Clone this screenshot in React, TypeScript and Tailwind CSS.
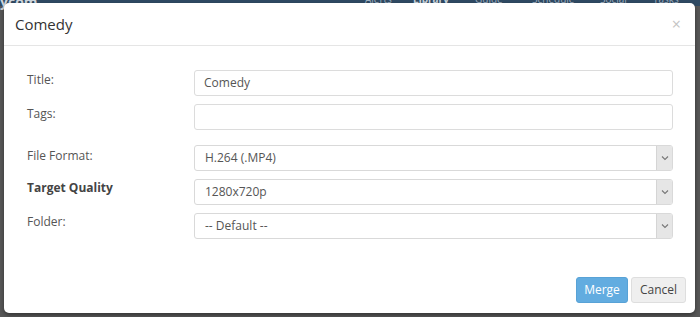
import React from "react";

function Chevron() {
  return (
    <svg width="8" height="6" viewBox="0 0 8 6" fill="none">
      <path d="M1 1.5 L4 4.5 L7 1.5" stroke="#777" strokeWidth="1.1" />
    </svg>
  );
}

function Select({ value }: { value: string }) {
  return (
    <div className="flex h-[26px] w-[479px] rounded-[3px] border border-[#d9d9d9] bg-white overflow-hidden">
      <div className="flex-1 flex items-center pl-[10px] text-[12px] text-[#555]">{value}</div>
      <div className="w-[16px] flex items-center justify-center bg-[#e6e6e6] border-l border-[#d5d5d5]">
        <Chevron />
      </div>
    </div>
  );
}

function Input({ value }: { value?: string }) {
  return (
    <div className="flex items-center h-[26px] w-[479px] rounded-[3px] border border-[#dcdcdc] bg-white pl-[9px] text-[12px] text-[#555]">
      {value}
    </div>
  );
}

export default function App() {
  return (
    <div
      className="relative w-[700px] h-[317px] overflow-hidden bg-[#575757]"
      style={{ fontFamily: '"Open Sans", "Noto Sans", sans-serif' }}
    >
      <div className="absolute left-0 top-0 w-[700px] h-[6px] bg-[#2f4a63] flex items-center text-[10px] text-[#9fb0c0]">
        <span className="absolute left-[0px] top-[-9px] font-bold text-[#cfd6dd] text-[14px]">ycom</span>
        <span className="absolute left-[365px] top-[-8px]">Alerts</span>
        <span className="absolute left-[413px] top-[-8px] font-bold text-[#c9d3dc]">Library</span>
        <span className="absolute left-[475px] top-[-8px]">Guide</span>
        <span className="absolute left-[532px] top-[-8px]">Schedule</span>
        <span className="absolute left-[600px] top-[-8px]">Social</span>
        <span className="absolute left-[653px] top-[-8px]">Tasks</span>
      </div>
      <div className="absolute left-[4px] top-[3px] w-[691px] h-[310px] rounded-[5px] bg-white flex flex-col shadow-[0_2px_4px_rgba(0,0,0,0.4)]">
        <div className="h-[43px] flex items-center justify-between pl-[11px] pr-[14px] border-b border-[#e5e5e5]">
          <span className="text-[15px] text-[#333]">Comedy</span>
          <span className="text-[16px] text-[#c4c4c4] leading-none">×</span>
        </div>
        <div className="flex flex-col pt-[24px] pl-[23px]">
          <div className="flex items-start">
            <div className="w-[167px] text-[12px] text-[#555] pt-[1px]">Title:</div>
            <Input value="Comedy" />
          </div>
          <div className="flex items-start mt-[8px]">
            <div className="w-[167px] text-[12px] text-[#555] pt-[1px]">Tags:</div>
            <Input />
          </div>
          <div className="flex items-center mt-[15px]">
            <div className="w-[167px] text-[12px] text-[#555] -mt-[4px]">File Format:</div>
            <Select value="H.264 (.MP4)" />
          </div>
          <div className="flex items-center mt-[8px]">
            <div className="w-[167px] text-[12px] text-[#444] font-bold -mt-[8px]">Target Quality</div>
            <Select value="1280x720p" />
          </div>
          <div className="flex items-center mt-[8px]">
            <div className="w-[167px] text-[12px] text-[#555] -mt-[8px]">Folder:</div>
            <Select value="-- Default --" />
          </div>
        </div>
        <div className="flex justify-end gap-[3px] pr-[9px] mt-[38px]">
          <div className="h-[26px] w-[52px] rounded-[3px] bg-[#62ace0] border border-[#58a2d6] flex items-center justify-center text-[12px] text-white">
            Merge
          </div>
          <div className="h-[26px] w-[55px] rounded-[3px] bg-[#efefef] border border-[#dedede] flex items-center justify-center text-[12px] text-[#444]">
            Cancel
          </div>
        </div>
      </div>
    </div>
  );
}
